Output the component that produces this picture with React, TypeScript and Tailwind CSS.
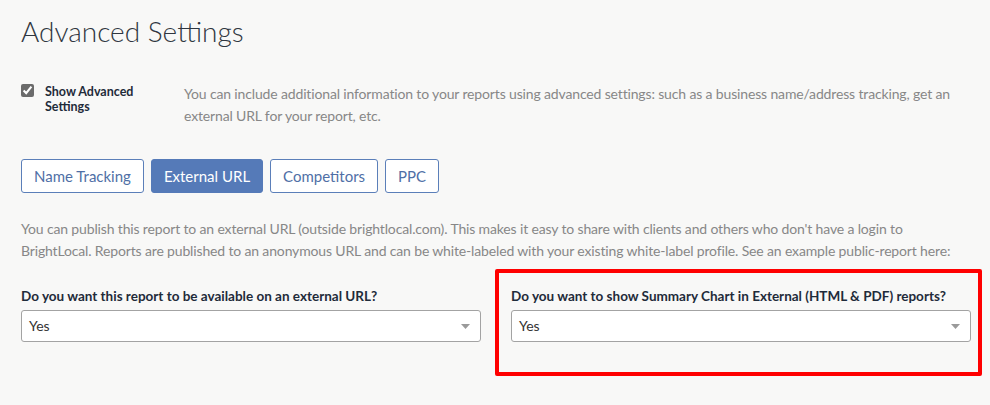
import { useState } from "react";

const tabs = ["Name Tracking", "External URL", "Competitors", "PPC"];

const Select = ({ value }: { value: string }) => (
  <div className="relative h-[32px] w-full rounded-[3px] border border-[#a3a3a3] bg-white">
    <span className="absolute left-[7px] top-[6px] text-[14px] leading-[18px] text-[#333]">{value}</span>
    <svg className="absolute right-[10px] top-[13px]" width="9" height="5" viewBox="0 0 9 5">
      <path d="M0 0h9L4.5 5z" fill="#9a9a9a" />
    </svg>
  </div>
);

const App = () => {
  const [active, setActive] = useState("External URL");

  return (
    <div className="min-h-[405px] w-[990px] bg-[#f8f8f7] px-[21px] pt-[13px] font-['Lato',sans-serif]">
      <h1 className="text-[28px] font-light leading-[36px] text-[#2f3640]">Advanced Settings</h1>

      {/* Toggle + intro */}
      <div className="mt-[34px] flex">
        <label className="flex w-[163px] shrink-0 gap-[11px]">
          <input type="checkbox" defaultChecked className="mt-[1px] h-[13px] w-[13px] accent-[#6b6b6b]" />
          <span className="pt-[1px] text-[12.5px] font-bold leading-[15px] text-[#1f2b3a]">
            Show Advanced
            <br />
            Settings
          </span>
        </label>
        <p className="text-[14px] leading-[22px] tracking-[-0.15px] text-[#878787]">
          You can include additional information to your reports using advanced settings: such as a business name/address tracking, get an external URL for your report, etc.
        </p>
      </div>

      {/* Tabs */}
      <div className="mt-[32px] flex gap-[7px]">
        {tabs.map((t) => (
          <button
            key={t}
            onClick={() => setActive(t)}
            className={
              t === active
                ? "h-[34px] rounded-[3px] border border-[#557ab8] bg-[#557ab8] px-[12px] text-[15px] text-white"
                : "h-[34px] rounded-[3px] border border-[#5b7fb9] bg-white px-[12px] text-[15px] text-[#4f6fa6]"
            }
          >
            {t}
          </button>
        ))}
      </div>

      <p className="mt-[25px] text-[14px] leading-[22px] tracking-[-0.15px] text-[#878787]">
        You can publish this report to an external URL (outside brightlocal.com). This makes it easy to share with clients and others who don't have a login to BrightLocal. Reports are published to an anonymous URL and can be white-labeled with your existing white-label profile. See an example public-report here:
      </p>

      {/* Questions */}
      <div className="mt-[25px] grid grid-cols-[460px_460px] gap-[30px]">
        <div>
          <div className="mb-[5px] text-[13.5px] font-bold leading-[18px] text-[#1f2b3a]">
            Do you want this report to be available on an external URL?
          </div>
          <Select value="Yes" />
        </div>
        <div className="relative">
          <div className="mb-[5px] text-[13.5px] font-bold leading-[18px] text-[#1f2b3a]">
            Do you want to show Summary Chart in External (HTML &amp; PDF) reports?
          </div>
          <Select value="Yes" />
          {/* highlight annotation */}
          <div className="pointer-events-none absolute bottom-[-34px] left-[-16px] right-[-11px] top-[-18px] rounded-[2px] border-[4px] border-[#ff0000]" />
        </div>
      </div>
    </div>
  );
};

export default App;
